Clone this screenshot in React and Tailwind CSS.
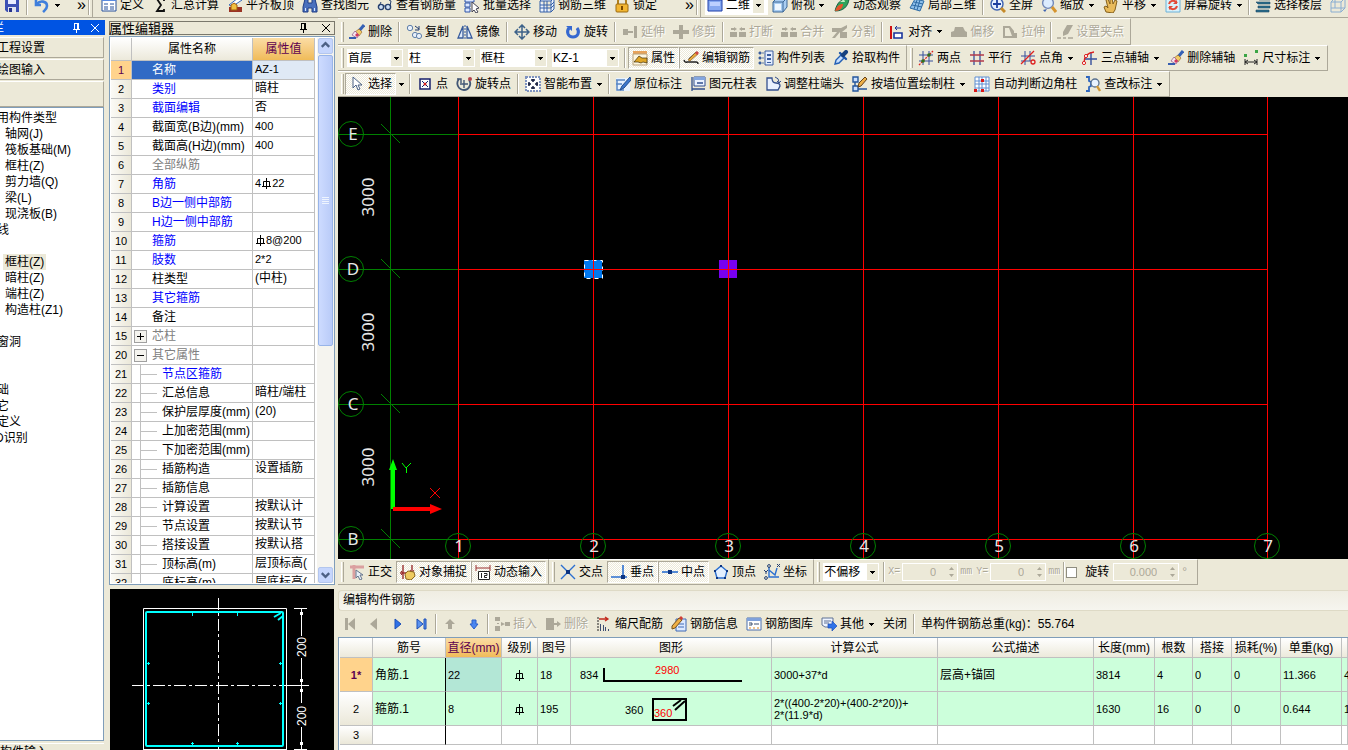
import { clsx } from "clsx";

const GREY = "#aca899";

const icons = {
  save: <><path d="M1 1h14v14H3l-2-2z" fill="#3c50b4" /><path d="M4 1h8v6H4z" fill="#e8ecff" /><path d="M4 10h8v5H4z" fill="#dfe3ef" /><path d="M5 11h3v4H5z" fill="#26328a" /></>,
  undo: <path d="M2 3v5h5M3 7c3-4 10-3 10 2 0 3-2 4-4 6" fill="none" stroke="#3f7fdc" strokeWidth="2.6" />,
  define: <><path d="M1 2h14v12H1z" fill="#fff" stroke="#27509a" /><path d="M1 2h14v2H1z" fill="#5a8be0" /><path d="M3 7h4M3 10h4M9 7h4M9 10h4M3 12h4M9 12h4" stroke="#27509a" /></>,
  sigma: <path d="M12 4V2H5l4 6-4 6h7v-2" fill="none" stroke="#111" strokeWidth="1.8" />,
  alignTop: <><path d="M2 8l9-7 4 2-9 6z" fill="#fff" stroke="#3568b8" /><path d="M2 10h13v5H2z" fill="#9a3324" /><path d="M4 8l3-2 3 2v5H4z" fill="#f0c040" stroke="#a05a10" /></>,
  binocular: <><path d="M3 2h3v4h4V2h3l2 8v5h-5v-4H6v4H1v-5z" fill="#4a70bd" stroke="#1f3c85" /><path d="M3 11h1v3H3zM12 11h1v3h-1z" fill="#d8e6ff" /></>,
  glasses: <><circle cx="4" cy="10" r="2.6" fill="#cfe0f5" stroke="#27406e" strokeWidth="1.4" /><circle cx="11" cy="10" r="2.6" fill="#cfe0f5" stroke="#27406e" strokeWidth="1.4" /><path d="M6 9h3M13 9l1-5-2-1M2 9l2-4" stroke="#27406e" fill="none" /></>,
  batch: <><path d="M1 1h9v4H1zM1 6h5v4H1zM1 11h5v4H1z" fill="#dce8ff" stroke="#2f55a8" /><path d="M8 5l7 6-3 1 2 3-2 1-2-3-2 2z" fill="#fff" stroke="#445" /></>,
  rebar3d: <><path d="M1 4v11h11V4zM1 4l3-3h11v11l-3 3M12 4l3-3" fill="#eef4ff" stroke="#3560a8" /><path d="M5 4v11M8 4v11M1 8h11l3-3M1 11h11l3-3" stroke="#3560a8" fill="none" /></>,
  lock: <><path d="M4 8V4q0-3 4-3t4 3v4" fill="none" stroke="#b08020" strokeWidth="2" /><rect x="2" y="7" width="12" height="8" rx="1" fill="#f2b632" stroke="#9b6a10" /><path d="M8 9v4" stroke="#7a4a00" strokeWidth="2" /></>,
  view2d: <><path d="M1 3h14v11H1z" fill="#86a8f0" stroke="#1f3fa8" /><path d="M3 5h10v4H3z" fill="#bcd0ff" /></>,
  cube: <><path d="M1 5l4-4h10v9l-4 5H1z" fill="#a9cdf2" stroke="#3b6696" /><path d="M1 5h10v10M11 5l4-4" fill="none" stroke="#3b6696" /><path d="M3 7h6v6H3z" fill="#eef7ff" /></>,
  orbit: <><path d="M1 14C3 5 8 1 15 2c-1 8-6 12-14 12z" fill="#2fa35a" stroke="#1a5f43" /><path d="M1 14c2-5 4-7 8-7 0 4-3 7-8 7z" fill="#e8542c" /><path d="M6 5l4-3 1 3z" fill="#bfeebf" /></>,
  local3d: <><path d="M1 11L6 2l9 2-4 10z" fill="#8ec0ea" stroke="#2f6ca5" /><path d="M3 8l10 2M5 5l9 2M8 3L5 12M11 3L8 13" stroke="#2f6ca5" fill="none" /></>,
  fullscreen: <><circle cx="7" cy="7" r="6" fill="#e6f0ff" stroke="#3d62b0" strokeWidth="1.4" /><path d="M7 3v8M3 7h8" stroke="#1d3fa0" strokeWidth="1.8" /><path d="M11 11l4 4" stroke="#c58a2a" strokeWidth="3" /></>,
  zoom: <><circle cx="7" cy="6" r="5.4" fill="#dcecff" stroke="#7389b8" strokeWidth="1.4" /><path d="M11 10l4 5" stroke="#d6942e" strokeWidth="3" /><path d="M2 13l4-1-2 3z" fill="#3d62b0" /></>,
  hand: <path d="M3 15l-2-5 2-1 2 2-2-8 2-1 2 5 0-6h2l1 6 2-4 2 1-2 9-2 3z" fill="#e9bb5a" stroke="#85601c" />,
  screenRotate: <><path d="M1 1h14v14H1z" fill="#d9f2fb" stroke="#6cb2d8" /><path d="M4 7c1-4 6-4 8-1M12 9c-1 4-6 4-8 1" fill="none" stroke="#e24a38" strokeWidth="2" /><path d="M12 3v4H8zM4 13V9h4z" fill="#e24a38" /></>,
  floors: <path d="M4 1h11v2H4zM1 5h11l3 0v2H3zM3 9h12v2H3zM1 13h13v2H1z" fill="#2c6f8d" stroke="#1c4864" strokeWidth=".6" />,
  wire: <path d="M1 5l4-4h10v10l-4 4H1zM1 5h10v10M11 5l4-4M5 1v10H1M5 11h10" fill="none" stroke="#8aaed2" />,
  brush: <><path d="M15 1l-5 6" stroke="#3561b5" strokeWidth="3" /><path d="M10 5l3 3-3 4-4-4z" fill="#f1cb67" stroke="#8d5b20" strokeWidth=".6" /><path d="M6 7l4 4-2 3-5-3z" fill="#f6e6ee" stroke="#7a3a78" strokeWidth=".6" /><path d="M8 9l2 2-2 2-2-2z" fill="#d2395e" /><path d="M0 14h7" stroke="#355db0" strokeWidth="2" /></>,
  copy: <><circle cx="4" cy="4" r="2.7" fill="#e8f0fa" stroke="#5f7fa8" /><circle cx="9" cy="11" r="2.6" fill="#e8f0fa" stroke="#5f7fa8" /><circle cx="13" cy="12" r="2.6" fill="#e8f0fa" stroke="#5f7fa8" /><path d="M9 2l4 3M13 2v4h-4" fill="none" stroke="#223c70" /></>,
  mirror: <><path d="M6 2v12H1zM10 2v12h5z" fill="#dfeaf9" stroke="#375b9c" strokeWidth="1.3" /><path d="M8 1v14" stroke="#375b9c" strokeDasharray="2 1" /></>,
  move: <path d="M8 1v14M1 8h14M5 4l3-3 3 3M5 12l3 3 3-3M4 5L1 8l3 3M12 5l3 3-3 3" fill="none" stroke="#3d6289" strokeWidth="1.5" />,
  rotate: <><path d="M4 4c-3 4-1 9 4 9s7-5 4-9" fill="none" stroke="#3568d0" strokeWidth="3" /><path d="M1 2h6v5z" fill="#3568d0" /></>,
  extend: <path d="M1 5h5v2h5v2H6v2H1zM12 2h3v12h-3z" fill={GREY} />,
  trim: <path d="M6 1h4v5h6v4h-6v5H6v-5H0V6h6z" fill={GREY} />,
  breakAt: <path d="M1 4h3V3l3 2-3 2V6H1zM9 5l3-2v1h3v2h-3v1zM0 8h7v5H0zM9 8h7v5H9z" fill={GREY} />,
  split: <path d="M0 4h9l6-3v3l-5 4h5v6H8V8l-5 6H0l5-6H0z" fill={GREY} />,
  align: <><path d="M2 2v13" stroke="#d01010" strokeWidth="2" /><path d="M5 9h8v5H5z" fill="#fff" stroke="#19349c" strokeWidth="1.6" /><path d="M12 4H6M8 2L6 4l2 2" stroke="#19349c" fill="none" /></>,
  offset: <path d="M4 3h8l2 4 2 1v5H0V8l3-1z" fill={GREY} />,
  stretch: <path d="M1 2h7l4 5v2h3v5H1zM3 4v8h7l-3-8z" fillRule="evenodd" fill={GREY} />,
  grip: <><path d="M10 1h6l-5 9-5 2V8z" fill={GREY} /><path d="M0 14h4M6 14h3M11 14h5" stroke={GREY} strokeWidth="1.5" /></>,
  props: <><path d="M1 1h14v4H1z" fill="#e7a35a" /><path d="M1 4h14v11H1z" fill="#fdf6df" stroke="#b8a27c" /><path d="M2 12l5-6 3 2h5v5l-4-1-2 1-3-1z" fill="#e0a626" stroke="#3d2c0c" strokeWidth=".7" /></>,
  editBar: <><path d="M1 10q1 3 3 2h9q2 0 2 2M6 9l8-7" fill="none" stroke="#222" strokeWidth="1.4" /><path d="M5 10l8-8 2 2-8 7z" fill="#e9aa3c" stroke="#79501a" strokeWidth=".6" /><path d="M12 3l2-2 2 2-2 2z" fill="#cf4545" /></>,
  list: <><path d="M7 1h8v14H7z" fill="#e3edff" stroke="#3b5da0" /><path d="M9 4h4v2H9zM9 8h4v2H9zM9 12h4v1H9z" fill="#3b5da0" /><path d="M1 2h2v2H1zM1 7h2v2H1zM1 12h2v2H1zM4 3h2M4 8h2M4 13h2" fill="#3b5da0" stroke="#3b5da0" strokeWidth=".8" /></>,
  picker: <><path d="M2 14l1-4 5-5 3 3-5 5z" fill="#c7e0ff" stroke="#2560b5" strokeWidth="1.4" /><path d="M7 3l6 6" stroke="#1d55a8" strokeWidth="2.4" strokeLinecap="round" /><path d="M10 5l3-3" stroke="#17427f" strokeWidth="4" strokeLinecap="round" /></>,
  twoPoint: <><path d="M5 1v14M11 1v14M1 5h14M1 11h14" stroke="#364f9c" /><path d="M1 15L15 1" stroke="#dd2020" strokeDasharray="2 1" strokeWidth="1.3" /><circle cx="5" cy="11" r="1.8" fill="#30711b" /><circle cx="11" cy="5" r="1.8" fill="#30711b" /></>,
  parallel: <><path d="M5 1v14M11 1v14" stroke="#364f9c" strokeWidth="1.3" /><path d="M1 5h14M1 11h14" stroke="#b23a4b" strokeWidth="1.3" /></>,
  pointAngle: <><path d="M5 1v14M10 1v10M1 6h14M1 11h10" stroke="#364f9c" /><path d="M1 14L14 1" stroke="#dd2020" strokeWidth="1.3" /><circle cx="13" cy="12" r="2" fill="none" stroke="#dd2020" strokeWidth="1.3" /></>,
  arc: <><path d="M9 2v13M2 9h13" stroke="#364f9c" strokeWidth="1.4" /><path d="M2 13Q2 3 12 2" fill="none" stroke="#dd2020" strokeWidth="1.4" /><circle cx="2" cy="13" r="1.6" fill="#fff" stroke="#dd2020" /><circle cx="4" cy="6" r="1.6" fill="#fff" stroke="#dd2020" /></>,
  dimension: <><path d="M1 4h3v3H1zM12 0h3v3h-3z" fill="#3ba545" /><path d="M2 9v6M14 9v6M2 12h12M5 10l-3 2 3 2M11 10l3 2-3 2" stroke="#222" fill="none" /></>,
  cursor: <path d="M4 1v11l3-3 2 5 2-1-2-4h4z" fill="#fff" stroke="#4a6184" />,
  point: <><path d="M3 3h10v10H3z" fill="#fff" stroke="#18206c" strokeWidth="1.5" /><path d="M5 5l6 6M11 5l-6 6" stroke="#18206c" /><circle cx="8" cy="8" r="1.5" fill="#d02020" /></>,
  rotPoint: <><path d="M3 3c-4 5 0 11 5 11s8-6 5-10" fill="none" stroke="#425675" strokeWidth="1.8" /><path d="M8 4v8M4 8h8M1 3h4v4" fill="none" stroke="#425675" strokeWidth="1.4" /><circle cx="14" cy="3" r="2" fill="#b4434c" /></>,
  smart: <><rect x="1" y="1" width="14" height="14" fill="#fff" stroke="#7f93c0" strokeDasharray="2 1" strokeWidth="2" /><path d="M8 3v3M8 10v3M3 8h3M10 8h3M6 4h4M6 12h4M4 6v4M12 6v4" stroke="#151d3f" strokeWidth="1.5" fill="none" /></>,
  inPlace: <><path d="M1 2h14v13H1z" fill="#e8f3ff" /><path d="M1 4h9M1 8h6M2 4v10h7" stroke="#5986c4" fill="none" strokeWidth="1.5" /><path d="M15 1L7 10l-2 4 4-2 7-8z" fill="#3c78cf" stroke="#234c8d" /></>,
  chart: <><path d="M4 1h11v9H4z" fill="#eaf2ff" stroke="#314f8d" /><path d="M4 1h11v3H4z" fill="#84a6df" /><path d="M7 7h6M2 1v14M2 13h13" stroke="#314f8d" strokeWidth="1.3" fill="none" /></>,
  colEnd: <><path d="M2 2h5q0 5 4 5 4 0 4 3l-2 4H2z" fill="#e9f1ff" stroke="#334f8e" strokeWidth="1.3" /><path d="M10 1q4 1 4 5M12 5l2 2 2-2" fill="none" stroke="#334f8e" /></>,
  alongWall: <><path d="M1 1h5v5H1zM1 10h5v5H1z" fill="#cbe0ff" stroke="#24569c" strokeWidth="1.4" /><path d="M3 6v4M6 13h9" stroke="#24569c" strokeWidth="1.4" /><path d="M6 11l1-4 6-6 2 2-6 7z" fill="#efb046" stroke="#65421a" /></>,
  autoEdge: <><path d="M1 1h14v14H1zM1 5h14M1 8h14M1 12h14M5 1v14M8 1v14M12 1v14" fill="#fff" stroke="#5f8ed2" /><path d="M7 3h3v3H7zM0 13h3v3H0zM7 13h3v3H7z" fill="#dc1717" /></>,
  checkEdit: <><path d="M1 1h3v4l2 1v4l-2 1v4H1" fill="none" stroke="#2f66be" strokeWidth="1.8" /><circle cx="10" cy="7" r="4" fill="#e9f3ff" stroke="#5a7290" strokeWidth="1.3" /><path d="M12 10l3 5" stroke="#d19837" strokeWidth="2.4" /></>,
  ortho: <><path d="M1 3h14M5 1v14" stroke="#dba0a0" strokeWidth="3" /><path d="M7 6v8l2-2 2 4 2-1-2-4h3z" fill="#e9f0f8" stroke="#66758d" /></>,
  snap: <><path d="M3 1v14M12 1v9M0 9h7" stroke="#9a2f2f" strokeWidth="1.4" /><path d="M1 7l2 2-2 2M10 6l2 3 2-3" fill="none" stroke="#9a2f2f" /><path d="M5 10l3-3 6 1 1 4-4 4-5-1z" fill="#efcb60" stroke="#8d6720" /></>,
  dynInput: <><path d="M1 1v6M15 1v6M1 4h14" stroke="#9b3030" /><path d="M3.500 7.500h11v8h-11z" fill="#fff" stroke="#222" /><path d="M6.500 9v5M9 9.500h3v2H9.500v2H12" fill="none" stroke="#222" /></>,
  cross: <><path d="M1 1l14 14M15 1L1 15" stroke="#2b6fd0" strokeWidth="1.4" /><path d="M6 6h4v4H6z" fill="#0c3480" /></>,
  perp: <><path d="M12 1v12M0 13h16" stroke="#2b6fd0" strokeWidth="1.6" /><path d="M10 11h4v4h-4z" fill="#0c3480" /></>,
  mid: <><path d="M0 8h16" stroke="#2b6fd0" strokeWidth="1.6" /><path d="M6 6h4v4H6z" fill="#0c3480" /></>,
  vertex: <><path d="M8 2l6 5-2 7H4L2 7z" fill="#e3f0ff" stroke="#2b6fd0" strokeWidth="1.4" /><path d="M7 1h2v2H7zM13 6h2v2h-2zM1 6h2v2H1zM3 13h2v2H3zM11 13h2v2h-2z" fill="#0c3480" /></>,
  coord: <><path d="M5 3v10h10M5 6l6 5 2-7" fill="none" stroke="#2b6fd0" strokeWidth="1.4" /><circle cx="5" cy="2" r="1.4" fill="none" stroke="#243f70" /><circle cx="2" cy="14" r="1.4" fill="none" stroke="#243f70" /><path d="M13 0l3 3M16 0l-3 3M0 6l2 2 2-2M2 8v2" stroke="#243f70" fill="none" /></>,
  first: <path d="M3 2h3v12H3zM13 2v12L6 8z" fill={GREY} />,
  prev: <path d="M11 2v12L4 8z" fill={GREY} />,
  next: <path d="M5 3v10l6-5z" fill="#2f72e8" stroke="#1d4fb8" />,
  last: <path d="M3 3v10l6-5zM10 3h2v10h-2z" fill="#5b93f0" stroke="#1d4fb8" />,
  up: <path d="M8 3l5 5h-3v5H6V8H3z" fill={GREY} />,
  down: <path d="M6 4h4v4h2l-4 5-4-5h2z" fill="#4a86f0" stroke="#2a5fc8" />,
  insert: <path d="M1 1h5v4H1zM1 10h5v5H1zM11 6h5v4h-5zM3 7h2v1H3zM7 6l4 2-4 2z" fill={GREY} />,
  remove: <path d="M1 2h8v12H1zM9 7h3V5l4 3-4 3V9H9z" fill={GREY} />,
  scale: <><path d="M2 1v14" stroke="#222" strokeDasharray="2 1" /><path d="M3 3h9M9 1l3 2-3 2" stroke="#c22a1d" fill="none" strokeWidth="1.3" /><path d="M4.500 8v7M7.500 9v6M9.500 11v4M12.500 13v2" stroke="#3d4d73" /></>,
  info: <><path d="M5 3h10v12H5z" fill="#dce9ff" stroke="#3f69b4" /><path d="M7 8h6M7 11h6" stroke="#3f69b4" /><path d="M1 10l7-8 3 2-7 8-3 1z" fill="#efb046" stroke="#76501c" /><path d="M8 2l2-2 2 2-1 2z" fill="#d13c34" /></>,
  library: <><path d="M1 2h14v12H1z" fill="#fff" stroke="#4a6fae" /><path d="M1 2h14v3H1z" fill="#7fa1db" /><path d="M3 9h3V7H3M8 8h5" stroke="#3a4c6c" fill="none" /><path d="M3 12h2M7 12h2M11 12h2" stroke="#e08b24" /></>,
  other: <><path d="M1 2h11v9H4l-3-2z" fill="#eef4ff" stroke="#5f7194" /><path d="M3 5h7M3 7h5" stroke="#5f7194" /><path d="M7 8h4V5l5 5-5 5v-3H7z" fill="#2f72e8" stroke="#1d4fb8" strokeWidth=".7" /></>,
};

function Icon({ name }) {
  return (
    <svg viewBox="0 0 16 16" className="h-4 w-4 shrink-0" aria-hidden="true">
      {icons[name]}
    </svg>
  );
}

function Caret() {
  return (
    <svg viewBox="0 0 5 3" className="h-[3px] w-[5px] shrink-0" aria-hidden="true" shapeRendering="crispEdges">
      <path d="M0 0h5v1H0zM1 1h3v1H1zM2 2h1v1H2z" fill="currentColor" />
    </svg>
  );
}

function Tool({ icon, label, arrow, pressed, disabled }) {
  return (
    <button
      type="button"
      disabled={disabled}
      className={clsx(
        "flex h-[22px] shrink-0 items-center gap-[3px] border px-[3px] whitespace-nowrap",
        pressed
          ? "border-t-[#aca899] border-r-white border-b-white border-l-[#aca899] bg-[repeating-conic-gradient(#fff_0_25%,#ece9d8_0_50%)] bg-[length:2px_2px]"
          : "border-transparent",
        disabled && "text-[#aca899] [text-shadow:1px_1px_0_#fff]"
      )}
    >
      {icon ? <Icon name={icon} /> : null}
      {label}
      {arrow ? <span className="flex w-2 justify-center"><Caret /></span> : null}
    </button>
  );
}

function Sep({ tight }) {
  return <span className={clsx("h-5 w-[2px] shrink-0 border-r border-l border-r-white border-l-[#aca899]", tight ? "mx-px" : "mx-[2px]")} />;
}

function Bar({ children }) {
  return (
    <div className="flex h-full shrink-0 items-center border-t border-r border-b border-t-white border-r-[#aca899] border-b-[#aca899] pr-[2px] pl-[3px]">
      <span className="mr-px h-5 w-[3px] shrink-0 border-r border-l border-r-[#aca899] border-l-white" />
      {children}
    </div>
  );
}

function Combo({ value, label, className }) {
  return (
    <span className={clsx("relative mr-[3px] ml-[2px] flex h-[18px] shrink-0 bg-white", className)}>
      <select aria-label={label} defaultValue={value} className="h-full w-full appearance-none pl-px leading-none outline-none">
        <option>{value}</option>
      </select>
      <span className="pointer-events-none absolute top-px right-px bottom-px flex w-[11px] items-center justify-center bg-[#ece9d8]">
        <Caret />
      </span>
    </span>
  );
}

function Spin({ value, label, className }) {
  return (
    <span className={clsx("flex h-[18px] shrink-0 items-center border border-white", className)}>
      <input aria-label={label} defaultValue={value} disabled className="w-0 flex-1 bg-transparent pr-3 text-right text-[11px] text-[#aca899]" />
      <svg viewBox="0 0 7 12" className="mr-[2px] h-3 w-[7px]" aria-hidden="true">
        <path d="M1 4h5L3.500 1zM1 8h5l-2.500 3z" fill={GREY} />
      </svg>
    </span>
  );
}

function Rebar() {
  return (
    <svg viewBox="0 0 11 11" className="inline-block h-[11px] w-[11px] align-[-2px]" aria-label="HRB400">
      <path d="M5.500 0v11M2.500 8V3.500h6V8M1 8.500h9" fill="none" stroke="#000" />
    </svg>
  );
}

function Pin() {
  return (
    <svg viewBox="0 0 9 10" className="h-[10px] w-[9px]" aria-hidden="true">
      <path d="M2 .5h5M2.500 0v6M5.500 0v6M6.500 0v6M1 6.500h7M4.500 7v3" fill="none" stroke="currentColor" />
    </svg>
  );
}

function Cross() {
  return (
    <svg viewBox="0 0 8 8" className="h-2 w-2" aria-hidden="true">
      <path d="M0 0l8 8M8 0L0 8" fill="none" stroke="currentColor" />
    </svg>
  );
}

function MainToolbar() {
  return (
    <header className="h-[18px] shrink-0 overflow-hidden border-b border-[#aca899]">
      <div className="-mt-2 flex h-[26px] items-center">
        <span className="w-[3px]" />
        <Tool icon="save" />
        <Sep />
        <Tool icon="undo" arrow />
        <span className="ml-3 text-[16px]">»</span>
        <Sep />
        <span className="mr-1 h-full w-[3px] border-l border-[#aca899]" />
        <Tool icon="define" label="定义" />
        <Tool icon="sigma" label="汇总计算" />
        <Tool icon="alignTop" label="平齐板顶" />
        <Tool icon="binocular" label="查找图元" />
        <Tool icon="glasses" label="查看钢筋量" />
        <Tool icon="batch" label="批量选择" />
        <Tool icon="rebar3d" label="钢筋三维" />
        <Tool icon="lock" label="锁定" />
        <span className="ml-6 text-[16px]">»</span>
        <Sep />
        <span className="mr-1 h-full w-[3px] border-l border-[#aca899]" />
        <span className="flex h-5 shrink-0 items-center bg-white pl-[2px]">
          <Icon name="view2d" />
          <Combo value="二维" label="视图" className="w-10" />
        </span>
        <Tool icon="cube" label="俯视" arrow />
        <Tool icon="orbit" label="动态观察" />
        <Tool icon="local3d" label="局部三维" />
        <Sep />
        <Tool icon="fullscreen" label="全屏" />
        <Tool icon="zoom" label="缩放" arrow />
        <Tool icon="hand" label="平移" arrow />
        <Tool icon="screenRotate" label="屏幕旋转" arrow />
        <Sep tight />
        <Tool icon="floors" label="选择楼层" />
        <Tool icon="wire" />
      </div>
    </header>
  );
}

const tree = [
  ["用构件类型", "-ml-[3px]"],
  ["轴网(J)", "ml-[5px]"],
  ["筏板基础(M)", "ml-[5px]"],
  ["框柱(Z)", "ml-[5px]"],
  ["剪力墙(Q)", "ml-[5px]"],
  ["梁(L)", "ml-[5px]"],
  ["现浇板(B)", "ml-[5px]"],
  ["线", "-ml-[3px]"],
  ["", ""],
  ["框柱(Z)", "ml-[3px] bg-[#ece9d8] px-[2px]"],
  ["暗柱(Z)", "ml-[5px]"],
  ["端柱(Z)", "ml-[5px]"],
  ["构造柱(Z1)", "ml-[5px]"],
  ["", ""],
  ["窗洞", "-ml-[3px]"],
  ["", ""],
  ["", ""],
  ["础", "-ml-[3px]"],
  ["它", "-ml-[3px]"],
  ["定义", "-ml-[3px]"],
  ["D识别", "-ml-[5px]"],
];

function Sidebar() {
  return (
    <aside className="flex w-[105px] shrink-0 flex-col overflow-hidden pt-[2px]">
      <div className="flex h-[15px] shrink-0 items-center justify-end gap-[10px] bg-[#0054e3] pr-[6px] text-white">
        <span className="-ml-2 flex-1">栏</span>
        <Pin />
        <Cross />
      </div>
      <div className="mr-px flex flex-1 flex-col">
        <button type="button" className="mt-[2px] h-[21px] border-t border-r border-b border-t-white border-r-[#aca899] border-b-[#aca899] text-left">
          <span className="-ml-[3px]">工程设置</span>
        </button>
        <button type="button" className="mt-px h-[21px] border-t border-r border-b border-t-white border-r-[#aca899] border-b-[#aca899] text-left">
          <span className="-ml-[3px]">绘图输入</span>
        </button>
        <div className="mt-px h-[26px] border-t border-r border-b border-t-white border-r-[#aca899] border-b-[#aca899]" />
        <ul className="flex-1 border-t border-r border-b border-[#7f9db9] bg-white pt-[2px] leading-4">
          {tree.map(([text, style], i) => (
            <li key={i} className="h-4 whitespace-nowrap">
              <span className={clsx("inline-block h-4", style)}>{text}</span>
            </li>
          ))}
        </ul>
        <button type="button" className="mt-[2px] h-[7px] overflow-hidden border-t border-white text-left leading-4">
          <span className="block">构件输入</span>
        </button>
      </div>
    </aside>
  );
}

const steel = (before, after) => <span className="text-[11px]">{before}<Rebar />{after}</span>;

const props = [
  [1, "名称", "AZ-1", "selected"],
  [2, "类别", "暗柱", "blue"],
  [3, "截面编辑", "否", "blue"],
  [4, "截面宽(B边)(mm)", "400"],
  [5, "截面高(H边)(mm)", "400"],
  [6, "全部纵筋", "", "grey"],
  [7, "角筋", steel("4", "22"), "blue"],
  [8, "B边一侧中部筋", "", "blue"],
  [9, "H边一侧中部筋", "", "blue"],
  [10, "箍筋", steel("", "8@200"), "blue"],
  [11, "肢数", "2*2", "blue"],
  [12, "柱类型", "(中柱)"],
  [13, "其它箍筋", "", "blue"],
  [14, "备注", ""],
  [15, "芯柱", "", "grey", "+"],
  [20, "其它属性", "", "grey", "-"],
  [21, "节点区箍筋", "", "blue", "child"],
  [22, "汇总信息", "暗柱/端柱", "", "child"],
  [23, "保护层厚度(mm)", "(20)", "", "child"],
  [24, "上加密范围(mm)", "", "", "child"],
  [25, "下加密范围(mm)", "", "", "child"],
  [26, "插筋构造", "设置插筋", "", "child"],
  [27, "插筋信息", "", "", "child"],
  [28, "计算设置", "按默认计", "", "child"],
  [29, "节点设置", "按默认节", "", "child"],
  [30, "搭接设置", "按默认搭", "", "child"],
  [31, "顶标高(m)", "层顶标高(", "", "child"],
  [32, "底标高(m)", "层底标高(", "", "child"],
];

function PropName({ text, kind }) {
  if (kind === "child") {
    return (
      <span className="flex h-[18px] items-center">
        <span className="h-full w-[9px] shrink-0 border-r border-[#c0c0c0]" />
        <span className="mr-[5px] w-4 shrink-0 border-t border-[#c0c0c0]" />
        {text}
      </span>
    );
  }
  return (
    <span className="flex h-[18px] items-center">
      <span className="flex w-5 shrink-0 pl-[2px]">
        {kind ? (
          <button type="button" aria-label={kind === "+" ? "展开" : "折叠"} className="h-[13px] w-[13px] border border-[#a0a0a0] bg-[#f4f3ee]">
            <svg viewBox="0 0 11 11" className="h-[11px] w-[11px]">
              <path d={kind === "+" ? "M2 5.500h7M5.500 2v7" : "M2 5.500h7"} stroke="#000" />
            </svg>
          </button>
        ) : null}
      </span>
      {text}
    </span>
  );
}

function PropertyEditor() {
  const line = "border-r border-b border-[#c0c0c0] p-0";
  return (
    <section className="flex w-[226px] shrink-0 flex-col pt-[3px]">
      <div className="flex h-[14px] shrink-0 items-center gap-[14px] border border-[#7a786c] pr-1">
        <h2 className="-ml-px flex-1 text-[13px] leading-none">属性编辑器</h2>
        <Pin />
        <Cross />
      </div>
      <div className="mt-px flex min-h-0 flex-1 justify-between overflow-hidden border border-[#7f9db9] bg-white py-px pl-px">
        <div className="h-full w-[204px] overflow-hidden">
          <table className="w-full table-fixed border-separate border-spacing-0 whitespace-nowrap">
            <colgroup>
              <col className="w-[21px]" />
              <col />
              <col className="w-[62px]" />
            </colgroup>
            <thead>
              <tr className="h-[23px] bg-linear-to-b from-white to-[#ebe8d9]">
                <th className={line} />
                <th className={clsx(line, "font-normal")}>属性名称</th>
                <th className={clsx(line, "bg-linear-to-b from-[#fbdca4] to-[#f0bb58] font-normal text-[#5c0050]")}>属性值</th>
              </tr>
            </thead>
            <tbody>
              {props.map(([no, name, value, tone, kind]) => (
                <tr key={no} className="h-[19px]">
                  <td className={clsx(line, "text-center text-[11px]", tone === "selected" ? "bg-[#ffd38c] text-[#5c0050]" : "bg-linear-to-r from-[#fbfaf6] to-[#ebe8d9]")}>{no}</td>
                  <td
                    className={clsx(
                      line,
                      tone === "selected" && "bg-[#316ac5] text-white",
                      tone === "blue" && "text-[#0000ff]",
                      tone === "grey" && "text-[#808080]"
                    )}
                  >
                    <PropName text={name} kind={kind} />
                  </td>
                  <td className={clsx(line, "overflow-hidden", tone === "selected" && "bg-[#dfe9f5]")}>
                    <span className={clsx("block h-[18px] overflow-hidden pl-[2px] leading-[17px]", /^[\w*@-]+$/.test(value) && "text-[11px]")}>{value}</span>
                  </td>
                </tr>
              ))}
            </tbody>
          </table>
        </div>
        <div className="flex w-[17px] flex-col items-center bg-[#f5f4ef] text-[#4d6185]">
          <ScrollButton d="M3 8l4-4 4 4" label="向上" />
          <div className="mt-px flex h-[291px] w-[15px] items-center justify-center rounded-xs border border-[#98b4e8] bg-linear-to-r from-[#cddbff] to-[#b9cbf8]">
            <svg viewBox="0 0 8 8" className="h-2 w-2"><path d="M0 .5h7M0 2.500h7M0 4.500h7M0 6.500h7" stroke="#eef4fe" /></svg>
          </div>
          <span className="flex-1" />
          <ScrollButton d="M3 5l4 4 4-4" label="向下" />
        </div>
      </div>
      <SectionPreview />
    </section>
  );
}

function ScrollButton({ d, label }) {
  return (
    <button type="button" aria-label={label} className="h-4 w-[15px] shrink-0 rounded-xs border border-[#b3c6ee] bg-[#c6d6fd]">
      <svg viewBox="0 0 14 14" className="h-[14px] w-[13px]"><path d={d} fill="none" stroke="currentColor" strokeWidth="2.500" /></svg>
    </button>
  );
}

function SectionPreview() {
  return (
    <svg className="mt-1 ml-px h-[161px] w-[224px] shrink-0 bg-black font-['Liberation_Sans',sans-serif] text-[12px]" role="img" aria-label="截面预览">
      <g fill="none" stroke="#fff">
        <path d="M33.500 161V19.500h143V161M33.500 160.500h143" />
        <path d="M108.500 9v152M22 96.500h154" strokeDasharray="12 3 3 3" />
        <path d="M176 96.500h23M184 19.500h13M184 160.500h13M191.500 19v28M191.500 69v45M191.500 138v23" />
      </g>
      <path d="M190 23h3v3h-3zM190 90h3v3h-3zM190 100h3v3h-3zM190 153h3v3h-3z" fill="#fff" />
      <rect x="36" y="23" width="137" height="134" rx="1" fill="none" stroke="#00ffff" strokeWidth="2" />
      <path d="M164 28l7-4M168 31l5-4" stroke="#00ffff" strokeWidth="2" fill="none" />
      <path d="M36 74.500h4M36 114.500h4M169 74.500h4M169 114.500h4M82.500 24v3M127.500 24v3M82.500 153v3M127.500 153v3M170.500 73v3M170.500 113v3M38.500 73v3M38.500 113v3M81 154.500h3M126 154.500h3" stroke="#00ffff" fill="none" />
      <text transform="translate(196 58) rotate(-90)" textAnchor="middle" fill="#fff">200</text>
      <text transform="translate(196 127) rotate(-90)" textAnchor="middle" fill="#fff">200</text>
    </svg>
  );
}

const axisX = [120, 255, 390, 525, 660, 795, 929];
const axisY = [["E", 37], ["D", 172], ["C", 307], ["B", 442]];

function Drawing() {
  return (
    <svg className="min-h-0 w-full flex-1 bg-black font-['Noto_Sans',sans-serif] text-[17px]" role="img" aria-label="轴网">
      <rect x="246" y="163" width="18" height="18" fill="#0078f0" />
      <rect x="246.500" y="163.500" width="18" height="18" fill="none" stroke="#fff" strokeDasharray="4 4" />
      <rect x="381" y="163" width="18" height="18" fill="#7800f0" />
      <g fill="none" stroke="#008000" shapeRendering="crispEdges">
        <path d="M52.500 0v462" />
        {axisY.map(([name, y]) => (
          <path key={name} d={`M0 ${y + 0.5}h120M43 ${y - 10}l19 19`} />
        ))}
      </g>
      <g stroke="#ff0000" shapeRendering="crispEdges">
        {axisY.map(([name, y]) => <path key={name} d={`M120 ${y + 0.5}h810`} />)}
        {axisX.map((x) => <path key={x} d={`M${x + 0.5} 0v462`} />)}
      </g>
      <g fill="none" stroke="#008000">
        {axisY.map(([name, y]) => <circle key={name} cx="13" cy={y} r="12.500" />)}
        {axisX.map((x) => <circle key={x} cx={x} cy="449" r="12.500" />)}
      </g>
      <g fill="#e6e6e6" textAnchor="middle">
        {axisY.map(([name, y]) => <text key={name} x="15" y={y + 6}>{name}</text>)}
        {axisX.map((x, i) => <text key={x} x={x + 1} y="455">{i + 1}</text>)}
        {[100, 235, 370].map((y) => (
          <text key={y} transform={`translate(36 ${y}) rotate(-90)`}>3000</text>
        ))}
      </g>
      <path d="M53 412v-39h-2l4-11 4 11h-2v39z" fill="#00ff00" />
      <path d="M55 410h37v-3l12 5-12 5v-3H55z" fill="#ff0000" />
      <path d="M64 366l4 5 5-5M68.500 371v5" fill="none" stroke="#00ff00" />
      <path d="M92 391l10 10M102 391l-10 10" fill="none" stroke="#ff0000" />
    </svg>
  );
}

const columns = [
  ["", "w-[33px]"],
  ["筋号", "w-[73px]"],
  ["直径(mm)", "w-[56px]"],
  ["级别", "w-[36px]"],
  ["图号", "w-[33px]"],
  ["图形", "w-[201px]"],
  ["计算公式", "w-[166px]"],
  ["公式描述", "w-[156px]"],
  ["长度(mm)", "w-[61px]"],
  ["根数", "w-[38px]"],
  ["搭接", "w-[39px]"],
  ["损耗(%)", "w-[49px]"],
  ["单重(kg)", "w-[61px]"],
  ["", ""],
];

const shapeBar = (
  <svg className="block h-[33px] w-[200px]" role="img" aria-label="834 2980">
    <path d="M33 10v13h138" fill="none" stroke="#000" strokeWidth="2" />
    <text x="9" y="21">834</text>
    <text x="84" y="16" fill="#ff0000">2980</text>
  </svg>
);

const shapeStirrup = (
  <svg className="block h-[33px] w-[200px]" role="img" aria-label="360 360">
    <path d="M82 7h33v21H82zM102 14l8-6M104 18l10-9" fill="none" stroke="#000" strokeWidth="2" />
    <text x="54" y="22">360</text>
    <text x="83" y="25" fill="#ff0000">360</text>
  </svg>
);

const stirrupFormula = <>2*((400-2*20)+(400-2*20))+<br />2*(11.9*d)</>;

const bars = [
  ["1*", "角筋.1", "22", <Rebar />, "18", shapeBar, "3000+37*d", "层高+锚固", "3814", "4", "0", "0", "11.366", "4"],
  ["2", "箍筋.1", "8", <Rebar />, "195", shapeStirrup, stirrupFormula, "", "1630", "16", "0", "0", "0.644", "1"],
];

function RebarTable() {
  const line = "border-r border-b border-[#c0c0c0]";
  return (
    <div className="h-[113px] shrink-0 overflow-hidden border-t border-l border-[#7f9db9] bg-white pl-px">
      <table className="w-full table-fixed border-separate border-spacing-0">
        <colgroup>
          {columns.map(([, width], i) => <col key={i} className={width} />)}
        </colgroup>
        <thead>
          <tr className="h-5 bg-linear-to-b from-white to-[#ebe8d9] whitespace-nowrap">
            {columns.map(([name], i) => (
              <th key={i} className={clsx(line, "p-0 font-normal", i === 2 && "bg-linear-to-b from-[#fbdca4] to-[#f0bb58] text-[#5c0050]")}>{name}</th>
            ))}
          </tr>
        </thead>
        <tbody>
          {bars.map((row, r) => (
            <tr key={r} className="h-[34px] bg-[#ccffdb] text-[11px]">
              {row.map((cell, i) => (
                <td
                  key={i}
                  className={clsx(
                    line,
                    "py-0 leading-3",
                    i === 5 ? "px-0" : "px-[2px]",
                    (i === 0 || i === 3) && "text-center",
                    i === 1 && "border-r-black text-[12px]",
                    i === 7 && "text-[12px]",
                    i === 0 && (r === 0 ? "bg-[#ffd38c] font-bold text-[#5c0050]" : "bg-linear-to-b from-white to-[#ebe8d9]"),
                    i === 2 && r === 0 && "bg-[#b3e7d6]"
                  )}
                >
                  {cell}
                </td>
              ))}
            </tr>
          ))}
          <tr className="h-[19px] text-[11px]">
            {columns.map((col, i) => (
              <td key={i} className={clsx(line, "p-0 text-center leading-3", i === 0 && "bg-linear-to-b from-white to-[#ebe8d9]", i === 1 && "border-r-black")}>
                {i === 0 ? 3 : null}
              </td>
            ))}
          </tr>
        </tbody>
      </table>
    </div>
  );
}

function Unit({ children }) {
  return <span className="mx-[2px] font-['Liberation_Mono',monospace] text-[10px] text-[#aca899] [text-shadow:1px_1px_0_#fff]">{children}</span>;
}

function SnapBar() {
  return (
    <div className="flex h-[26px] shrink-0">
      <Bar>
        <Tool icon="ortho" label="正交" />
        <Tool icon="snap" label="对象捕捉" pressed />
        <Tool icon="dynInput" label="动态输入" pressed />
      </Bar>
      <Bar>
        <Tool icon="cross" label="交点" />
        <Tool icon="perp" label="垂点" pressed />
        <Tool icon="mid" label="中点" pressed />
        <Tool icon="vertex" label="顶点" />
        <Tool icon="coord" label="坐标" />
      </Bar>
      <Bar>
        <Combo value="不偏移" label="偏移方式" className="w-[56px]" />
        <Sep tight />
        <Unit>X=</Unit>
        <Spin value="0" label="X 偏移" className="w-[56px]" />
        <Unit>mm</Unit>
        <Unit>Y=</Unit>
        <Spin value="0" label="Y 偏移" className="w-[56px]" />
        <Unit>mm</Unit>
        <Sep tight />
        <label className="flex items-center gap-2">
          <input type="checkbox" className="h-[11px] w-[11px] appearance-none border border-[#8f8d80] bg-white" />
          旋转
        </label>
        <Spin value="0.000" label="旋转角度" className="ml-1 w-[66px]" />
        <span className="mr-2 ml-[3px] text-[#aca899]">°</span>
      </Bar>
    </div>
  );
}

function Workspace() {
  return (
    <main className="ml-[3px] flex min-w-0 flex-1 flex-col overflow-hidden">
      <div className="flex h-[27px] shrink-0">
        <Bar>
          <Tool icon="brush" label="删除" />
          <Sep />
          <Tool icon="copy" label="复制" />
          <Tool icon="mirror" label="镜像" />
          <Sep />
          <Tool icon="move" label="移动" />
          <Tool icon="rotate" label="旋转" />
          <Sep />
          <Tool icon="extend" label="延伸" disabled />
          <Tool icon="trim" label="修剪" disabled />
          <Sep />
          <Tool icon="breakAt" label="打断" disabled />
          <Tool icon="breakAt" label="合并" disabled />
          <Tool icon="split" label="分割" disabled />
          <Sep />
          <Tool icon="align" label="对齐" arrow />
          <Tool icon="offset" label="偏移" disabled />
          <Tool icon="stretch" label="拉伸" disabled />
          <Sep tight />
          <Tool icon="grip" label="设置夹点" disabled />
        </Bar>
      </div>
      <div className="flex h-[26px] shrink-0">
        <Bar>
          <Combo value="首层" label="楼层" className="w-[56px]" />
          <Combo value="柱" label="构件类别" className="w-[67px]" />
          <Combo value="框柱" label="构件类型" className="w-[67px]" />
          <Combo value="KZ-1" label="构件" className="w-[67px]" />
          <Sep />
          <Tool icon="props" label="属性" pressed />
          <Tool icon="editBar" label="编辑钢筋" pressed />
          <Tool icon="list" label="构件列表" />
          <Tool icon="picker" label="拾取构件" />
        </Bar>
        <Bar>
          <Tool icon="twoPoint" label="两点" />
          <Tool icon="parallel" label="平行" />
          <Tool icon="pointAngle" label="点角" arrow />
          <Tool icon="arc" label="三点辅轴" arrow />
          <Tool icon="brush" label="删除辅轴" />
          <Tool icon="dimension" label="尺寸标注" arrow />
        </Bar>
      </div>
      <div className="flex h-[26px] shrink-0">
        <Bar>
          <Tool icon="cursor" label="选择" pressed />
          <span className="mx-[3px]"><Caret /></span>
          <Sep />
          <Tool icon="point" label="点" />
          <Tool icon="rotPoint" label="旋转点" />
          <Sep />
          <Tool icon="smart" label="智能布置" arrow />
          <Sep tight />
          <Tool icon="inPlace" label="原位标注" />
          <Tool icon="chart" label="图元柱表" />
          <Tool icon="colEnd" label="调整柱端头" />
          <Tool icon="alongWall" label="按墙位置绘制柱" arrow />
          <Tool icon="autoEdge" label="自动判断边角柱" />
          <Tool icon="checkEdit" label="查改标注" arrow />
        </Bar>
      </div>
      <Drawing />
      <SnapBar />
      <section className="mt-[5px] shrink-0">
        <h2 className="h-[21px] rounded-l-sm border-t border-b border-l border-[#dedac6] bg-linear-to-b from-[#efede2] to-[#f6f5ef] pl-1 leading-[19px]">编辑构件钢筋</h2>
        <div className="flex h-[26px] items-center">
          <Tool icon="first" disabled />
          <Tool icon="prev" disabled />
          <Tool icon="next" />
          <Tool icon="last" />
          <Sep tight />
          <Tool icon="up" disabled />
          <Tool icon="down" />
          <Sep tight />
          <Tool icon="insert" label="插入" disabled />
          <Tool icon="remove" label="删除" disabled />
          <Tool icon="scale" label="缩尺配筋" />
          <Tool icon="info" label="钢筋信息" />
          <Tool icon="library" label="钢筋图库" />
          <Tool icon="other" label="其他" arrow />
          <Tool label="关闭" />
          <Sep />
          <output className="ml-1">单构件钢筋总重(kg)：55.764</output>
        </div>
        <RebarTable />
      </section>
    </main>
  );
}

export default function App() {
  return (
    <div className="flex h-screen flex-col overflow-hidden bg-[#ece9d8] font-['Liberation_Sans','Noto_Sans_CJK_SC',sans-serif] text-[12px] leading-4 text-black">
      <MainToolbar />
      <div className="flex min-h-0 flex-1">
        <Sidebar />
        <div className="ml-1 flex">
          <PropertyEditor />
        </div>
        <Workspace />
      </div>
    </div>
  );
}
